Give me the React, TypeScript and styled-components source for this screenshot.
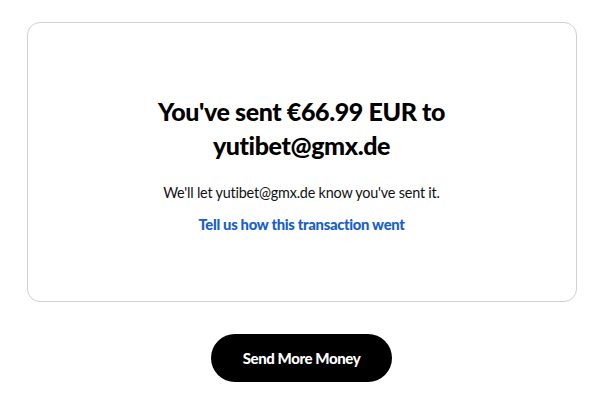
import React from "react";
import styled, { createGlobalStyle } from "styled-components";

const GlobalStyle = createGlobalStyle`
  html, body {
    margin: 0;
    padding: 0;
    background: #ffffff;
  }
  body {
    font-family: "Lato", "Noto Sans", sans-serif;
    color: #000;
  }
`;

const Page = styled.div`
  width: 599px;
  min-height: 405px;
  padding-top: 22px;
  padding-left: 4px;
  box-sizing: border-box;
  display: flex;
  flex-direction: column;
  align-items: center;
`;

const Card = styled.div`
  width: 550px;
  height: 280px;
  box-sizing: border-box;
  border: 1px solid #d0d0d0;
  border-radius: 13px;
  display: flex;
  flex-direction: column;
  align-items: center;
  padding-top: 71px;
`;

const Title = styled.h1`
  margin: 0;
  width: 320px;
  text-align: center;
  font-family: "Lato", sans-serif;
  font-weight: 900;
  font-size: 25px;
  line-height: 34px;
  letter-spacing: -0.4px;
  color: #000;
`;

const Note = styled.p`
  margin: 22px 0 0;
  font-family: "Lato", sans-serif;
  font-size: 14.4px;
  letter-spacing: -0.2px;
  color: #111;
`;

const FeedbackLink = styled.a`
  margin-top: 14px;
  font-family: "Lato", sans-serif;
  font-weight: 900;
  font-size: 14.8px;
  letter-spacing: -0.3px;
  color: #1660c8;
  text-decoration: none;
  cursor: pointer;
`;

const SendButton = styled.button`
  margin-top: 32px;
  width: 181px;
  height: 48px;
  border: none;
  border-radius: 24px;
  background: #000;
  color: #fff;
  font-family: "Lato", sans-serif;
  font-weight: 900;
  font-size: 15px;
  letter-spacing: -0.4px;
  cursor: pointer;
`;

const App: React.FC = () => {
  return (
    <>
      <GlobalStyle />
      <Page>
        <Card>
          <Title>You've sent €66.99 EUR to yutibet@gmx.de</Title>
          <Note>We'll let yutibet@gmx.de know you've sent it.</Note>
          <FeedbackLink>Tell us how this transaction went</FeedbackLink>
        </Card>
        <SendButton>Send More Money</SendButton>
      </Page>
    </>
  );
};

export default App;
